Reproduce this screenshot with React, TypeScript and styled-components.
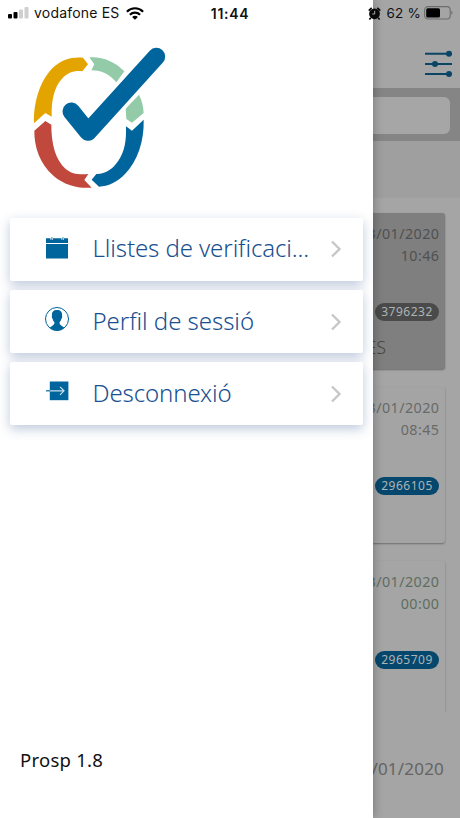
import React from "react";
import styled, { createGlobalStyle } from "styled-components";

const Global = createGlobalStyle`
  *, *::before, *::after { box-sizing: border-box; }
  html, body { margin: 0; padding: 0; }
  body { font-family: "Noto Sans", "Open Sans", sans-serif; overflow: hidden; }
  svg { display: block; }
`;

const Screen = styled.div`
  position: relative;
  width: 460px;
  height: 818px;
  overflow: hidden;
  background: #a5a5a5;
`;

/* Dimmed page behind the drawer */
const Page = styled.div`
  height: 100%;
  display: flex;
  flex-direction: column;
`;

const PageHeader = styled.header`
  height: 88px;
  flex: none;
  display: flex;
  justify-content: flex-end;
  align-items: flex-start;
  padding: 50px 7px 0 0;
`;

const SearchBar = styled.div`
  height: 53px;
  flex: none;
  padding: 9px 10px 7px;
  background: #858585;
`;

const SearchField = styled.div`
  height: 37px;
  border-radius: 6px;
  background: #a6a6a6;
`;

const SectionBand = styled.div`
  height: 57px;
  flex: none;
  background: #9f9f9f;
`;

const CardList = styled.div`
  height: 514px;
  flex: none;
  overflow: hidden;
  padding: 15px 15px 0;
  display: flex;
  flex-direction: column;
  gap: 18px;
`;

const Card = styled.article<{ $tone: string; $ink: string }>`
  height: 156px;
  flex: none;
  display: flex;
  flex-direction: column;
  align-items: flex-end;
  padding: 10px 6px 0 0;
  border-radius: 3px;
  background: ${(p) => p.$tone};
  color: ${(p) => p.$ink};
  box-shadow: 0 1px 2px rgba(0, 0, 0, 0.35);
`;

const Stamp = styled.span`
  font-size: 14.3px;
  line-height: 22px;
  letter-spacing: 0.45px;
  margin-right: -0.45px;
  white-space: nowrap;
`;

const Code = styled.span<{ $fill: string }>`
  width: 64px;
  height: 18px;
  margin-top: 36px;
  flex: none;
  border-radius: 9px;
  background: ${(p) => p.$fill};
  color: #acb4b6;
  font-size: 12px;
  line-height: 17px;
  letter-spacing: 0.5px;
  text-align: center;
`;

const Place = styled.span`
  margin: 14px 53px 0 0;
  color: #464646;
  font-size: 18px;
  font-weight: 300;
  line-height: 24px;
`;

const PageFooter = styled.footer`
  flex: 1;
  padding: 44px 16px 0 0;
  text-align: right;
  color: #646464;
  font-size: 17px;
  line-height: 26px;
  letter-spacing: 0.2px;
`;

/* Drawer, lying over the page */
const Drawer = styled.aside`
  position: absolute;
  inset: 0 auto 0 0;
  width: 373px;
  display: flex;
  flex-direction: column;
  background: #fff;
  box-shadow: 0 0 10px rgba(0, 0, 0, 0.3);
  overflow: hidden;
  clip-path: inset(0 -12px 0 0);
`;

const LogoBox = styled.div`
  height: 178px;
  flex: none;
  margin: 40px 0 0 20px;
`;

const Menu = styled.nav`
  display: flex;
  flex-direction: column;
  gap: 9.5px;
  padding: 0 10px;
`;

const MenuItem = styled.a`
  height: 62.7px;
  display: grid;
  grid-template-columns: 47.5px 1fr 33px;
  align-items: center;
  padding-left: 35px;
  border-radius: 2px;
  background: #fff;
  box-shadow: 0 4px 12px rgba(38, 76, 138, 0.3);
`;

const MenuLabel = styled.span<{ $track: number }>`
  padding-bottom: 2px;
  color: #19508f;
  font-size: 24px;
  font-weight: 300;
  line-height: 32px;
  letter-spacing: ${(p) => p.$track}px;
  white-space: nowrap;
`;

const Version = styled.div`
  margin: auto 0 45px 20px;
  color: #111;
  font-size: 18.5px;
  line-height: 26px;
  letter-spacing: 0.25px;
`;

const StatusBar = styled.div`
  position: absolute;
  inset: 0 0 auto 0;
  height: 26px;
  display: grid;
  grid-template-columns: 210px 40px 1fr;
  align-items: center;
  font-family: Inter, sans-serif;
  color: #111;
`;

const StatusGroup = styled.div<{ $end?: boolean }>`
  display: flex;
  align-items: center;
  justify-content: ${(p) => (p.$end ? "flex-end" : "flex-start")};
  padding: ${(p) => (p.$end ? "0 7px 0 0" : "0 0 0 8px")};
  font-size: 13.5px;
  line-height: 18px;
  white-space: nowrap;
`;

const Carrier = styled.span`
  margin: 0 6px 0 5px;
  font-size: 14px;
  letter-spacing: 0.2px;
`;

const Percent = styled.span`
  margin: 0 3px 0 6px;
  letter-spacing: 0.2px;
`;

const Clock = styled.span`
  font-size: 14px;
  font-weight: 600;
  letter-spacing: 0.7px;
  text-align: center;
  white-space: nowrap;
`;

const Logo = () => (
  <svg width="160" height="160" viewBox="0 0 480 480">
    <path fill="#e4a400" d="M42 250C40 188 60 119 101 81C128 57 156 50 189 53L204 73L187 94C163 91 143 98 126 116C101 143 94 184 95 230L76 219Z" />
    <path fill="#93caa7" d="M208 52C246 49 285 64 313 94L289 127C268 103 247 91 214 91L223 73Z" />
    <path fill="#93caa7" d="M357 164C366 182 370 200 371 219L336 248L319 237L317 206Z" />
    <path fill="#00659c" d="M318 259L336 272L371 239C373 303 352 364 315 402C291 427 265 439 237 440L215 419L229 402C255 403 277 389 294 364C315 334 319 302 318 259Z" />
    <path fill="#c0483c" d="M43 272L76 243L94 254C94 313 106 358 137 387C156 402 177 405 205 402L193 420L215 443C175 446 134 436 101 408C59 372 42 318 43 272Z" />
    <path d="M154 214L204 276L409 50" fill="none" stroke="#00659c" strokeWidth="53" strokeLinecap="round" strokeLinejoin="round" />
  </svg>
);

const FilterIcon = () => (
  <svg width="28" height="28" viewBox="0 0 28 28" stroke="#0b4566" fill="#0b4566">
    <path d="M0 3.7H27M0 13.9H27M0 24H27" strokeWidth="2" />
    <g stroke="none">
      <circle cx="24" cy="3.7" r="3" />
      <circle cx="10" cy="13.9" r="3" />
      <circle cx="24" cy="24" r="3" />
    </g>
  </svg>
);

const CalendarIcon = () => (
  <svg width="24" height="24" viewBox="0 0 24 24">
    <g transform="translate(0 -1.8)">
      <path fill="#00659c" d="M1 3H23V7.7H1ZM1 8.7H23V23.3H1Z" />
      <path d="M6.7 1.5V4.7M17.7 1.5V4.7" stroke="#fff" strokeWidth="2.6" />
      <path d="M6.9 2V4.9H5M17.9 2V4.9H16" stroke="#00659c" strokeWidth=".9" fill="none" />
    </g>
  </svg>
);

const ProfileIcon = () => (
  <svg width="24" height="24" viewBox="0 0 24 24" overflow="visible">
    <g transform="translate(0 -3)">
      <circle cx="12" cy="12" r="11.5" fill="none" stroke="#00659c" strokeWidth="1" />
      <path fill="#00659c" d="M12 3C15.5 3 17.5 5 17 8.5C17.4 9.5 17.2 11 16.3 12C16 13.5 15.3 14.5 14.6 15.2C14.5 17.4 15.2 17.8 19.4 20.7C15.5 24.6 8.5 24.6 4.6 20.7C8.8 17.8 9.5 17.4 9.4 15.2C8.7 14.5 8 13.5 7.7 12C6.8 11 6.6 9.5 7 8.5C6.5 5 8.5 3 12 3Z" />
    </g>
  </svg>
);

const ExitIcon = () => (
  <svg width="24" height="24" viewBox="0 0 24 24" overflow="visible">
    <g transform="translate(0 -3.2)">
      <path fill="#00659c" d="M4.8 2.7H23.4V21.4H4.8Z" />
      <path d="M1 12H5" stroke="#00659c" strokeWidth="1.2" />
      <path d="M5 12H18.6M15 8L19 12L15 16" fill="none" stroke="#c9e0ec" strokeWidth="1.2" />
    </g>
  </svg>
);

const Chevron = () => (
  <svg width="12" height="18" viewBox="0 0 12 18" fill="none" stroke="#c6c7c8" strokeWidth="2.4">
    <path d="M2 1.5L9.5 9L2 16.5" />
  </svg>
);

const SignalIcon = () => (
  <svg width="21" height="12" viewBox="0 0 21 12">
    <rect y="7" width="4" height="4.5" rx="1" fill="#000" />
    <rect x="5.5" y="5" width="4" height="6.5" rx="1" fill="#000" />
    <rect x="11" y="2.5" width="4" height="9" rx="1" fill="#cfcfcf" />
    <rect x="16.5" y="0" width="4" height="11.5" rx="1" fill="#cfcfcf" />
  </svg>
);

const WifiIcon = () => (
  <svg width="18" height="13" viewBox="0 0 18 13" fill="none" stroke="#000" strokeWidth="2.2">
    <path d="M.9 4.7C5.5 .1 12.5 .1 17.1 4.7M3.9 7.7C6.8 4.9 11.2 4.9 14.1 7.7" />
    <path d="M9 12.8L6.1 9.9C7.7 8.4 10.3 8.4 11.9 9.9Z" fill="#000" stroke="none" />
  </svg>
);

const AlarmIcon = () => (
  <svg width="13" height="13" viewBox="0 0 13 13">
    <circle cx="6.5" cy="6.8" r="5.4" fill="#080808" />
    <path d="M.8 3.6L3.7.9M12.2 3.6L9.3.9M2.8 10.8L1.4 12.5M10.2 10.8L11.6 12.5" stroke="#080808" strokeWidth="1.7" />
    <path d="M6.7 3.8V7H4.3" fill="none" stroke="#aaa" strokeWidth="1" />
  </svg>
);

const BatteryIcon = () => (
  <svg width="29" height="14" viewBox="0 0 29 14">
    <rect x=".6" y=".6" width="25.6" height="12.4" rx="3.4" fill="none" stroke="#6c6c6c" strokeWidth="1.1" />
    <rect x="2.2" y="2.2" width="13.8" height="9.2" rx="1.5" fill="#000" />
    <path d="M27.3 4.8Q28.7 5.1 28.7 6.8T27.3 8.8Z" fill="#777" />
  </svg>
);

const cards = [
  { date: "23/01/2020", time: "10:46", code: "3796232", tone: "#7f7f7f", ink: "#505050", fill: "#4a4a4a", place: "ES" },
  { date: "23/01/2020", time: "08:45", code: "2966105", tone: "#a4a4a4", ink: "#686a68", fill: "#06486d", place: "" },
  { date: "23/01/2020", time: "00:00", code: "2965709", tone: "#a4a5a4", ink: "#5f6d61", fill: "#06486d", place: "" },
];

const menu = [
  { label: "Llistes de verificaci...", track: -0.1, Icon: CalendarIcon },
  { label: "Perfil de sessió", track: -0.05, Icon: ProfileIcon },
  { label: "Desconnexió", track: -0.12, Icon: ExitIcon },
];

export default function App() {
  return (
    <Screen>
      <Global />
      <Page>
        <PageHeader><FilterIcon /></PageHeader>
        <SearchBar><SearchField /></SearchBar>
        <SectionBand />
        <CardList>
          {cards.map((c) => (
            <Card key={c.code} $tone={c.tone} $ink={c.ink}>
              <Stamp>{c.date}</Stamp>
              <Stamp>{c.time}</Stamp>
              <Code $fill={c.fill}>{c.code}</Code>
              {c.place && <Place>{c.place}</Place>}
            </Card>
          ))}
        </CardList>
        <PageFooter>23/01/2020</PageFooter>
      </Page>
      <Drawer>
        <LogoBox><Logo /></LogoBox>
        <Menu>
          {menu.map(({ label, track, Icon }) => (
            <MenuItem key={label}>
              <Icon />
              <MenuLabel $track={track}>{label}</MenuLabel>
              <Chevron />
            </MenuItem>
          ))}
        </Menu>
        <Version>Prosp 1.8</Version>
      </Drawer>
      <StatusBar>
        <StatusGroup><SignalIcon /><Carrier>vodafone ES</Carrier><WifiIcon /></StatusGroup>
        <Clock>11:44</Clock>
        <StatusGroup $end><AlarmIcon /><Percent>62 %</Percent><BatteryIcon /></StatusGroup>
      </StatusBar>
    </Screen>
  );
}
